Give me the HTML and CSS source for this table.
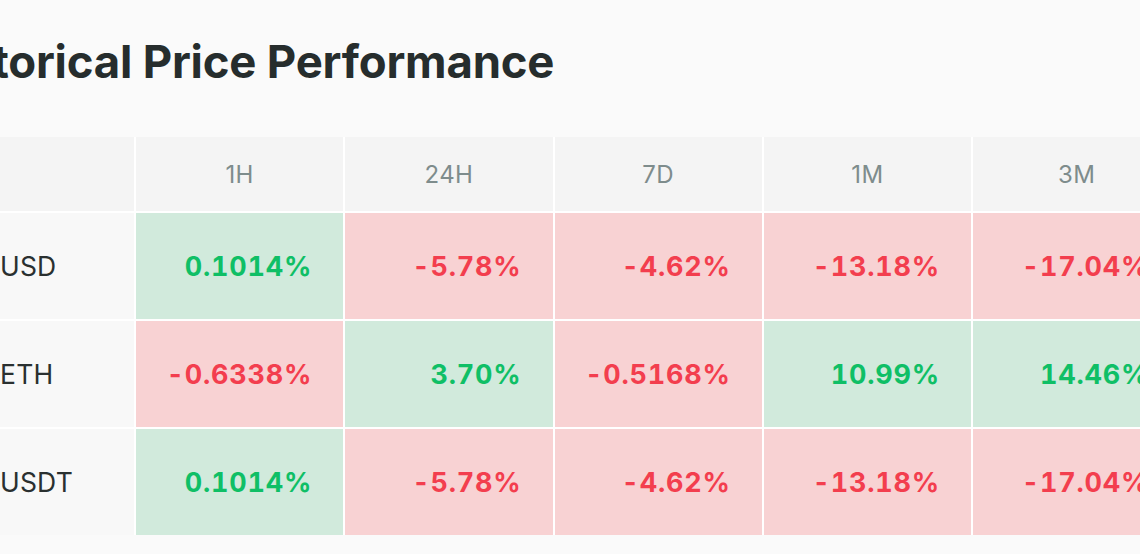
FILE: index.html
```html
<!DOCTYPE html>
<html lang="en">
<head>
<meta charset="utf-8">
<title>Historical Price Performance</title>
<link rel="stylesheet" href="styles.css">
</head>
<body>
<main class="section">
  <h2 class="title">Historical Price Performance</h2>
  <div class="perf-table">
    <div class="cell head corner"></div>
    <div class="cell head">1H</div>
    <div class="cell head">24H</div>
    <div class="cell head">7D</div>
    <div class="cell head">1M</div>
    <div class="cell head">3M</div>

    <div class="cell label"><span class="pair">USD</span></div>
    <div class="cell up">0.1014%</div>
    <div class="cell down">-5.78%</div>
    <div class="cell down">-4.62%</div>
    <div class="cell down">-13.18%</div>
    <div class="cell down">-17.04%</div>

    <div class="cell label"><span class="pair">ETH</span></div>
    <div class="cell down">-0.6338%</div>
    <div class="cell up">3.70%</div>
    <div class="cell down">-0.5168%</div>
    <div class="cell up">10.99%</div>
    <div class="cell up">14.46%</div>

    <div class="cell label"><span class="pair">USDT</span></div>
    <div class="cell up">0.1014%</div>
    <div class="cell down">-5.78%</div>
    <div class="cell down">-4.62%</div>
    <div class="cell down">-13.18%</div>
    <div class="cell down">-17.04%</div>
  </div>
</main>
</body>
</html>
```

FILE: styles.css
```css
html, body {
  margin: 0;
  padding: 0;
  background: #fafafa;
  overflow: hidden;
}

body {
  font-family: Inter, "Noto Sans", sans-serif;
  color: #262d2d;
}

.section {
  margin-left: -56px;
  padding-top: 37px;
  width: 1300px;
}

.title {
  margin: 0 0 0 -23px;
  height: 100px;
  font-size: 45.5px;
  font-weight: 700;
  line-height: 50px;
  letter-spacing: -0.2px;
  color: #262d2d;
}

.perf-table {
  display: grid;
  grid-template-columns: 190px repeat(5, 207.25px);
  grid-template-rows: 74px repeat(3, 106px);
  gap: 2px;
  background: #ffffff;
  width: max-content;
}

.cell {
  display: flex;
  align-items: center;
}

.head {
  background: #f4f4f4;
  justify-content: center;
  font-size: 24px;
  font-weight: 400;
  color: #7e8c8c;
  letter-spacing: 0.4px;
}

.label {
  background: #f8f8f8;
  padding-left: 56px;
  font-size: 26.5px;
  color: #2a3030;
  letter-spacing: 0.2px;
}

.up, .down {
  justify-content: flex-end;
  padding-right: 31px;
  font-size: 27px;
  font-weight: 700;
  letter-spacing: 0.8px;
  font-variant-numeric: tabular-nums;
}

.up {
  background: #d1eadc;
  color: #0fbf66;
}

.down {
  background: #f8d2d3;
  color: #f33e4e;
}
```
